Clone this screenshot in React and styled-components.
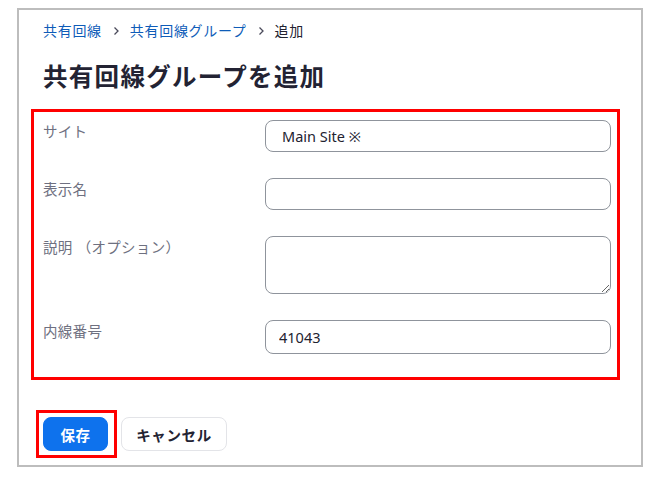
import styled, { createGlobalStyle } from "styled-components";

const GlobalStyle = createGlobalStyle`
  body {
    margin: 0;
    background: #fff;
    font-family: "Noto Sans", "Noto Sans CJK JP", sans-serif;
    color: #222230;
  }
`;

const Panel = styled.div`
  box-sizing: border-box;
  width: 626px;
  height: 459px;
  margin: 8px 0 0 17px;
  border: 2px solid #bdbdbd;
  padding: 11px 21px 0 12px;
`;

const Breadcrumb = styled.nav`
  display: flex;
  align-items: center;
  gap: 10px;
  margin-left: 12px;
  height: 20px;
  font-size: 14px;
  line-height: 20px;
`;

const Crumb = styled.span`
  color: ${(p) => (p.$current ? "#222230" : "#0e5cb8")};
  letter-spacing: 0.7px;
`;

const Title = styled.h1`
  margin: 20px 0 0 12px;
  font-size: 24.5px;
  line-height: 32px;
  font-weight: 700;
  letter-spacing: 1.3px;
  color: #232333;
`;

const FormBox = styled.div`
  box-sizing: border-box;
  margin-top: 16px;
  width: 589px;
  border: 3px solid #ff0000;
  padding: 8px 6px 23px 9px;
  display: grid;
  grid-template-columns: 222px 1fr;
  row-gap: 26px;
`;

const Label = styled.div`
  font-size: 14.5px;
  line-height: 20px;
  padding-top: 1px;
  color: #6e7080;
  letter-spacing: 0.3px;
`;

const Field = styled.input`
  box-sizing: border-box;
  width: 100%;
  height: ${(p) => p.$h || 32}px;
  border: 1px solid #8f949c;
  border-radius: 8px;
  padding: 0 ${(p) => p.$pad || 16}px;
  font-family: "Noto Sans", "Noto Sans CJK JP", sans-serif;
  font-size: 14.5px;
  color: #222230;
  outline: none;
  background: #fff;
`;

const Area = styled.textarea`
  box-sizing: border-box;
  width: 100%;
  height: 58px;
  border: 1px solid #8f949c;
  border-radius: 8px;
  padding: 6px 16px;
  font-family: "Noto Sans", "Noto Sans CJK JP", sans-serif;
  font-size: 14px;
  outline: none;
  display: block;
`;

const Actions = styled.div`
  display: flex;
  align-items: center;
  gap: 4px;
  margin: 30px 0 0 5px;
`;

const Highlight = styled.div`
  border: 3px solid #ff0000;
  padding: 4px 6px 4px 4px;
  display: flex;
`;

const Button = styled.button`
  box-sizing: border-box;
  height: 34px;
  width: ${(p) => p.$w}px;
  padding: 0;
  white-space: nowrap;
  border-radius: 8px;
  border: 1px solid ${(p) => (p.$primary ? "#0e72ed" : "#e3e4e8")};
  background: ${(p) => (p.$primary ? "#0e72ed" : "#fff")};
  color: ${(p) => (p.$primary ? "#fff" : "#232333")};
  font-family: "Noto Sans", "Noto Sans CJK JP", sans-serif;
  font-size: 14.5px;
  font-weight: 700;
  letter-spacing: 0.6px;
`;

const Chevron = () => (
  <svg width="8" height="10" viewBox="0 0 8 10">
    <path d="M2.5 1.5 L6 5 L2.5 8.5" fill="none" stroke="#4a4a5a" strokeWidth="1.3" />
  </svg>
);

export default function App() {
  return (
    <>
      <GlobalStyle />
      <Panel>
        <Breadcrumb>
          <Crumb>共有回線</Crumb>
          <Chevron />
          <Crumb>共有回線グループ</Crumb>
          <Chevron />
          <Crumb $current>追加</Crumb>
        </Breadcrumb>
        <Title>共有回線グループを追加</Title>
        <FormBox>
          <Label>サイト</Label>
          <Field defaultValue="Main Site ※" readOnly />
          <Label>表示名</Label>
          <Field />
          <Label>説明 （オプション）</Label>
          <Area />
          <Label>内線番号</Label>
          <Field $h={34} $pad={13} defaultValue="41043" />
        </FormBox>
        <Actions>
          <Highlight>
            <Button $primary $w={65}>保存</Button>
          </Highlight>
          <Button $w={106}>キャンセル</Button>
        </Actions>
      </Panel>
    </>
  );
}
